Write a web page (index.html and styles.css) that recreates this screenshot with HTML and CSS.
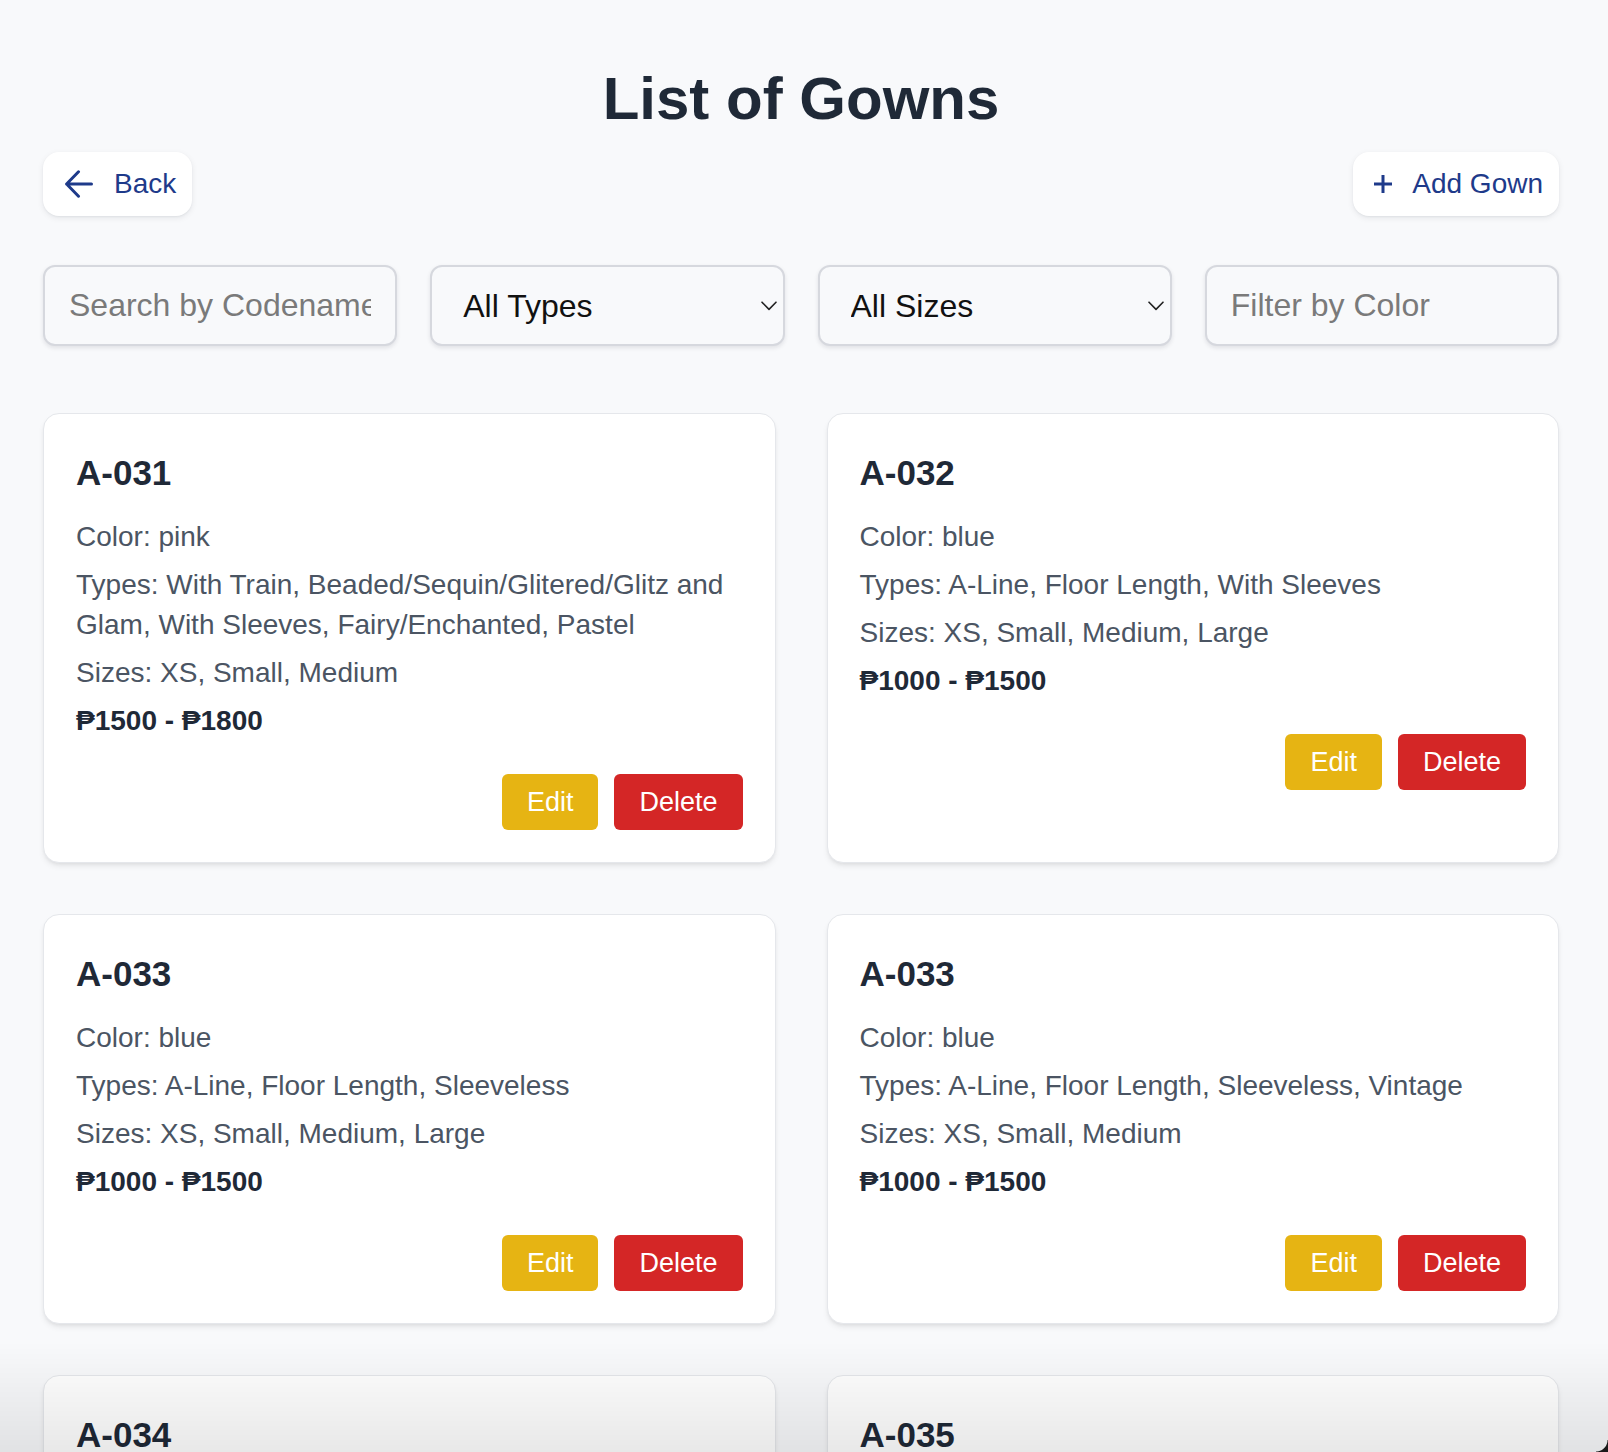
FILE: index.html
```html
<!DOCTYPE html>
<html lang="en">
<head>
<meta charset="utf-8">
<title>List of Gowns</title>
<link rel="stylesheet" href="styles.css">
</head>
<body>
<main class="page">
  <h1 class="page-title">List of Gowns</h1>

  <div class="toolbar">
    <button class="nav-btn back-btn" type="button">
      <svg class="icon-arrow" width="28" height="28" viewBox="0 0 28 28" aria-hidden="true">
        <path d="M13.5 1.8 L1.6 14 L13.5 26.2 M1.6 14 H26.5" fill="none" stroke="currentColor" stroke-width="3" stroke-linecap="round" stroke-linejoin="round"/>
      </svg>
      <span>Back</span>
    </button>
    <button class="nav-btn add-btn" type="button">
      <svg class="icon-plus" width="18" height="18" viewBox="0 0 18 18" aria-hidden="true">
        <path d="M9 0.5 V17.5 M0.5 9 H17.5" fill="none" stroke="currentColor" stroke-width="3" stroke-linecap="round"/>
      </svg>
      <span>Add Gown</span>
    </button>
  </div>

  <div class="filters">
    <input class="field" type="text" placeholder="Search by Codename">
    <div class="select-wrap">
      <select class="field select">
        <option>All Types</option>
      </select>
      <svg class="chevron" width="16" height="10" viewBox="0 0 16 10" aria-hidden="true">
        <path d="M1 1.2 L8 8.4 L15 1.2" fill="none" stroke="currentColor" stroke-width="1.6" stroke-linecap="round" stroke-linejoin="round"/>
      </svg>
    </div>
    <div class="select-wrap">
      <select class="field select">
        <option>All Sizes</option>
      </select>
      <svg class="chevron" width="16" height="10" viewBox="0 0 16 10" aria-hidden="true">
        <path d="M1 1.2 L8 8.4 L15 1.2" fill="none" stroke="currentColor" stroke-width="1.6" stroke-linecap="round" stroke-linejoin="round"/>
      </svg>
    </div>
    <input class="field" type="text" placeholder="Filter by Color">
  </div>

  <section class="grid">
    <article class="card">
      <h2 class="card-title">A-031</h2>
      <p class="card-line">Color: pink</p>
      <p class="card-line">Types: With Train, Beaded/Sequin/Glitered/Glitz and Glam, With Sleeves, Fairy/Enchanted, Pastel</p>
      <p class="card-line">Sizes: XS, Small, Medium</p>
      <p class="card-line price">₱1500 - ₱1800</p>
      <div class="actions">
        <button class="btn btn-edit" type="button">Edit</button>
        <button class="btn btn-delete" type="button">Delete</button>
      </div>
    </article>

    <article class="card">
      <h2 class="card-title">A-032</h2>
      <p class="card-line">Color: blue</p>
      <p class="card-line">Types: A-Line, Floor Length, With Sleeves</p>
      <p class="card-line">Sizes: XS, Small, Medium, Large</p>
      <p class="card-line price">₱1000 - ₱1500</p>
      <div class="actions">
        <button class="btn btn-edit" type="button">Edit</button>
        <button class="btn btn-delete" type="button">Delete</button>
      </div>
    </article>

    <article class="card">
      <h2 class="card-title">A-033</h2>
      <p class="card-line">Color: blue</p>
      <p class="card-line">Types: A-Line, Floor Length, Sleeveless</p>
      <p class="card-line">Sizes: XS, Small, Medium, Large</p>
      <p class="card-line price">₱1000 - ₱1500</p>
      <div class="actions">
        <button class="btn btn-edit" type="button">Edit</button>
        <button class="btn btn-delete" type="button">Delete</button>
      </div>
    </article>

    <article class="card">
      <h2 class="card-title">A-033</h2>
      <p class="card-line">Color: blue</p>
      <p class="card-line">Types: A-Line, Floor Length, Sleeveless, Vintage</p>
      <p class="card-line">Sizes: XS, Small, Medium</p>
      <p class="card-line price">₱1000 - ₱1500</p>
      <div class="actions">
        <button class="btn btn-edit" type="button">Edit</button>
        <button class="btn btn-delete" type="button">Delete</button>
      </div>
    </article>

    <article class="card">
      <h2 class="card-title">A-034</h2>
      <p class="card-line">Color: white</p>
      <p class="card-line">Types: Ball Gown, Floor Length</p>
      <p class="card-line">Sizes: Small, Medium</p>
      <p class="card-line price">₱1500 - ₱2000</p>
      <div class="actions">
        <button class="btn btn-edit" type="button">Edit</button>
        <button class="btn btn-delete" type="button">Delete</button>
      </div>
    </article>

    <article class="card">
      <h2 class="card-title">A-035</h2>
      <p class="card-line">Color: red</p>
      <p class="card-line">Types: Mermaid, Floor Length</p>
      <p class="card-line">Sizes: XS, Small</p>
      <p class="card-line price">₱1500 - ₱2000</p>
      <div class="actions">
        <button class="btn btn-edit" type="button">Edit</button>
        <button class="btn btn-delete" type="button">Delete</button>
      </div>
    </article>
  </section>
</main>
<div class="bottom-fade" aria-hidden="true"></div>
<div class="window-corner" aria-hidden="true"></div>
</body>
</html>
```

FILE: styles.css
```css
* {
  box-sizing: border-box;
}

html, body {
  margin: 0;
  padding: 0;
}

body {
  background: #f8f9fb;
  font-family: "Liberation Sans", Arial, "DejaVu Sans", sans-serif;
  color: #1f2937;
}

.page {
  padding: 63px 49px 40px 43px;
}

.page-title {
  margin: 0 0 17px;
  font-size: 60px;
  line-height: 72px;
  font-weight: 700;
  text-align: center;
  color: #1f2937;
}

.toolbar {
  display: flex;
  justify-content: space-between;
  align-items: center;
  height: 64px;
  margin-bottom: 49px;
}

.nav-btn {
  display: flex;
  align-items: center;
  height: 64px;
  padding: 0 16px 0 22px;
  border: none;
  border-radius: 16px;
  background: #ffffff;
  box-shadow: 0 2px 6px rgba(15, 23, 42, 0.08), 0 1px 2px rgba(15, 23, 42, 0.05);
  color: #1e3a8a;
  font-family: inherit;
  font-size: 28px;
  line-height: 32px;
  cursor: pointer;
}

.back-btn {
  gap: 21px;
}

.add-btn {
  gap: 20px;
  padding-left: 21px;
}

.icon-arrow,
.icon-plus {
  display: block;
  flex: none;
}

.filters {
  display: grid;
  grid-template-columns: repeat(4, 1fr);
  gap: 33px;
  height: 81px;
  margin-bottom: 67px;
}

.field {
  width: 100%;
  height: 81px;
  margin: 0;
  padding: 0 24px;
  border: 2px solid #d6d8de;
  border-radius: 12px;
  background: #f8f9fb;
  box-shadow: 0 2px 4px rgba(15, 23, 42, 0.1);
  font-family: inherit;
  font-size: 32px;
  color: #111111;
  outline: none;
}

.field::placeholder {
  color: #7a7a7a;
}

.select-wrap {
  position: relative;
}

.select {
  -webkit-appearance: none;
  appearance: none;
  padding-left: 31px;
  padding-right: 40px;
}

.chevron {
  position: absolute;
  right: 8px;
  top: 36px;
  color: #222222;
  pointer-events: none;
}

.grid {
  display: grid;
  grid-template-columns: 1fr 1fr;
  gap: 51px;
}

.card {
  padding: 32px;
  background: #ffffff;
  border: 1px solid #e5e7eb;
  border-radius: 16px;
  box-shadow: 0 4px 6px -1px rgba(0, 0, 0, 0.08), 0 2px 4px -2px rgba(0, 0, 0, 0.08);
}

.card-title {
  margin: 0 0 17px;
  font-size: 35px;
  line-height: 54px;
  font-weight: 700;
  color: #1f2937;
}

.card-line {
  margin: 0 0 8px;
  font-size: 28px;
  line-height: 40px;
  color: #4b5563;
}

.price {
  margin-bottom: 33px;
  font-weight: 700;
  color: #1f2937;
}

.actions {
  display: flex;
  justify-content: flex-end;
  gap: 16px;
}

.btn {
  height: 56px;
  padding: 0 25px;
  border: none;
  border-radius: 6px;
  font-family: inherit;
  font-size: 27px;
  color: #ffffff;
  cursor: pointer;
}

.btn-edit {
  background: #e6b413;
}

.btn-delete {
  background: #d42626;
}

.bottom-fade {
  position: fixed;
  left: 0;
  right: 0;
  bottom: 0;
  height: 110px;
  background: linear-gradient(to bottom, rgba(0, 0, 0, 0), rgba(0, 0, 0, 0.09));
  pointer-events: none;
}

.window-corner {
  position: fixed;
  right: 0;
  bottom: 0;
  width: 12px;
  height: 12px;
  background: radial-gradient(circle at 0 0, rgba(0, 0, 0, 0) 11px, #1a1a1a 12px);
  pointer-events: none;
}
```
